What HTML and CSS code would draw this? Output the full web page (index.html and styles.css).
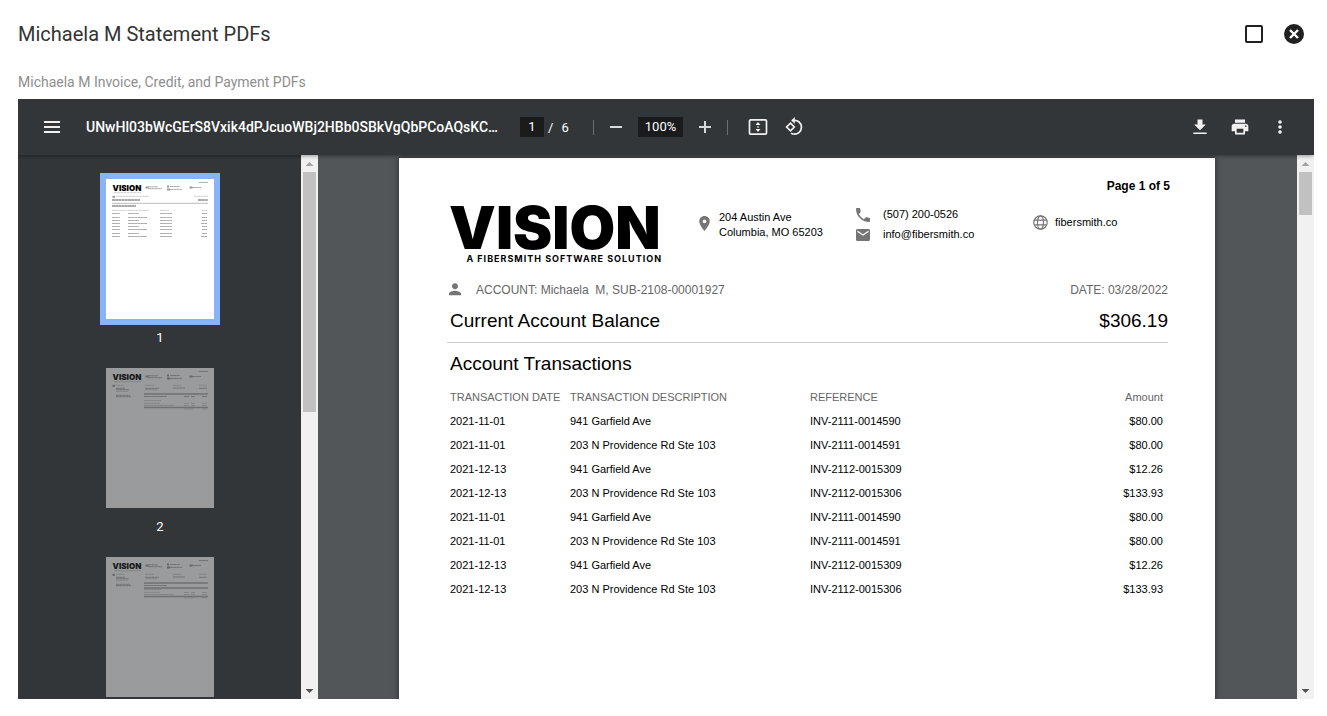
FILE: index.html
```html
<!DOCTYPE html>
<html lang="en">
<head>
<meta charset="utf-8">
<title>Michaela M Statement PDFs</title>
<link rel="stylesheet" href="styles.css">
</head>
<body>
<svg class="defs" aria-hidden="true">
  <symbol id="thumb-head" viewBox="0 0 108 140">
    <text x="6.600" y="12.200" class="mini-logo">VISION</text>
    <path class="mini faint" d="M8 13.700H35"/>
    <path class="mini" d="M93 3.500h9M42 7.800h10M42 9.700h14M64 7.500h10M64 10.400h12M86 8.500h9"/>
    <path class="mini-icon" d="M39.500 8.500h3M61 7.500h2M61 10.500h3M83.500 8.500h3"/>
  </symbol>
  <symbol id="thumb-invoice" viewBox="0 0 108 140">
    <use href="#thumb-head"/>
    <path class="mini-icon" d="M6.500 17.800h2.500"/>
    <path class="mini faint" d="M10 17.300h8M39 17.300h9M67 17.300h8M93 17.300h8M39 21.700h12M10 23.300h12"/>
    <path class="mini" d="M10 20.300h9M10 21.700h13M39 20.300h14M67 20h12M93 20.300h8M10 27.300h14M10 28.700h15"/>
    <path class="mini faint" d="M38 32.500h17M38 35.300h16M38 37.500h30M78 35.500h5M85 35.500h4M96 35.500h5M78 37.500h5M85 37.500h4M96 37.500h5M78 41h10M96 41h5"/>
    <path class="mini-rule" d="M38 39.500h64"/>
  </symbol>
</svg>

<header class="dialog-head">
  <h1>Michaela M Statement PDFs</h1>
  <div class="dialog-actions">
    <button class="plain" type="button" aria-label="Maximize"><svg width="24" height="24" viewBox="0 0 24 24"><rect x="4" y="4" width="16" height="16" rx="1" fill="none" stroke="#212121" stroke-width="2"/></svg></button>
    <button class="plain" type="button" aria-label="Close"><svg width="24" height="24" viewBox="0 0 24 24"><circle cx="12" cy="12" r="10" fill="#212121"/><path d="M8 8l8 8M16 8l-8 8" stroke="#fff" stroke-width="2.400"/></svg></button>
  </div>
</header>
<p class="subtitle">Michaela M Invoice, Credit, and Payment PDFs</p>

<main class="viewer">
  <div class="toolbar">
    <button class="plain" type="button" aria-label="Menu"><svg width="24" height="24" viewBox="0 0 24 24"><path fill="#f1f1f1" d="M4 18h16v-2H4zM4 13h16v-2H4zM4 6v2h16V6z"/></svg></button>
    <span class="filename">UNwHl03bWcGErS8Vxik4dPJcuoWBj2HBb0SBkVgQbPCoAQsKC…</span>
    <div class="pager">
      <input class="field" type="text" value="1" aria-label="Page number">
      <span>/</span><span>6</span>
    </div>
    <i class="divider"></i>
    <div class="zoom">
      <button class="plain" type="button" aria-label="Zoom out"><svg width="20" height="20" viewBox="0 0 20 20"><path fill="#d8d9da" d="M4 9h12v2H4z"/></svg></button>
      <input class="field percent" type="text" value="100%" aria-label="Zoom level">
      <button class="plain" type="button" aria-label="Zoom in"><svg width="20" height="20" viewBox="0 0 20 20"><path fill="#d8d9da" d="M4 9h5V4h2v5h5v2h-5v5H9v-5H4z"/></svg></button>
    </div>
    <i class="divider"></i>
    <div class="fit">
      <button class="plain" type="button" aria-label="Fit to page"><svg width="20" height="20" viewBox="0 0 20 20"><rect x="1.500" y="2.800" width="17" height="14.400" rx="1.300" fill="none" stroke="#f1f1f1" stroke-width="1.700"/><path fill="#f1f1f1" d="M10 5l2.500 3h-5zM10 15l2.500-3h-5zM9.300 9.300h1.400v1.400H9.300z"/></svg></button>
      <button class="plain" type="button" aria-label="Rotate"><svg width="20" height="20" viewBox="0 0 20 20"><g fill="none" stroke="#f1f1f1" stroke-width="1.700"><path d="M6.500 6.100l3.800 3.900-3.800 3.900L2.600 10z"/><path d="M9.500 3.400a6.900 6.900 0 1 1-.2 13.600c-.8-.1-1.500-.4-2.200-.8"/></g><path fill="#f1f1f1" d="M10.800 0v6.800L7.200 3.400z"/></svg></button>
    </div>
    <div class="file-actions">
      <button class="plain" type="button" aria-label="Download"><svg width="20" height="20" viewBox="0 0 24 24"><path fill="#f1f1f1" d="M19 9h-4V3H9v6H5l7 7zM4 18.500v2h16v-2z"/></svg></button>
      <button class="plain" type="button" aria-label="Print"><svg width="20" height="20" viewBox="0 0 24 24"><path fill="#f1f1f1" d="M19 8H5c-1.660 0-3 1.340-3 3v6h4v4h12v-4h4v-6c0-1.660-1.340-3-3-3zm-3 11H8v-5h8v5zm3-7c-.55 0-1-.45-1-1s.45-1 1-1 1 .45 1 1-.45 1-1 1zm-1-9H6v4h12V3z"/></svg></button>
      <button class="plain" type="button" aria-label="More actions"><svg width="20" height="20" viewBox="0 0 20 20"><g fill="#f1f1f1"><circle cx="10" cy="5" r="1.800"/><circle cx="10" cy="10" r="1.800"/><circle cx="10" cy="15" r="1.800"/></g></svg></button>
    </div>
  </div>

  <div class="panes">
    <nav class="thumbs" aria-label="Pages">
      <figure class="thumb selected">
        <svg viewBox="0 0 108 140"><use href="#thumb-head"/>
          <path class="mini-icon" d="M6.500 17.800h2.500"/>
          <path class="mini faint" d="M10 17.300h33M88 17.300h14M6 31.400h15M22 31.400h21M54 31.400h9M96 31.400h5"/>
          <path class="mini strong" d="M6 21h28M92 21h10M6 27h24"/>
          <path class="mini-rule thin" d="M6 24.300h96"/>
          <path class="mini" d="M6 34.500h8M22 34.500h11M54 34.500h12M96 34.500h5M6 38.500h8M22 38.500h19M54 38.500h12M96 38.500h5M6 41.500h8M22 41.500h11M54 41.500h12M96 41.500h5M6 44.500h8M22 44.500h19M54 44.500h12M95 44.500h6M6 47.500h8M22 47.500h11M54 47.500h12M96 47.500h5M6 50.500h8M22 50.500h19M54 50.500h12M96 50.500h5M6 54.500h8M22 54.500h11M54 54.500h12M96 54.500h5M6 57.500h8M22 57.500h19M54 57.500h12M95 57.500h6"/>
        </svg>
        <figcaption>1</figcaption>
      </figure>
      <figure class="thumb">
        <svg viewBox="0 0 108 140"><use href="#thumb-invoice"/>
          <path class="mini-rule" d="M38 26h64"/><path class="mini" d="M38 28.500h23M78 28.500h5M85 28.500h4M96 28.500h5"/>
        </svg>
        <figcaption>2</figcaption>
      </figure>
      <figure class="thumb">
        <svg viewBox="0 0 108 140"><use href="#thumb-invoice"/>
          <path class="mini-rule" d="M38 26h64M38 31h64"/><path class="mini" d="M38 28.500h23"/>
        </svg>
      </figure>
    </nav>
    <div class="scrollbar" aria-hidden="true"><i class="up"></i><div class="track"><div class="grip" style="height:47%"></div></div><i class="down"></i></div>

    <section class="stage">
      <article class="page">
        <p class="page-no">Page 1 of 5</p>
        <div class="letterhead">
          <div class="logo"><span class="logo-name">VISION</span><span class="logo-tag">A FIBERSMITH SOFTWARE SOLUTION</span></div>
          <div class="contact address">
            <svg width="11" height="15" viewBox="0 0 14 20"><path fill="#757575" d="M7 0C3.130 0 0 3.130 0 7c0 5.250 7 13 7 13s7-7.750 7-13c0-3.870-3.130-7-7-7zm0 9.500a2.500 2.500 0 0 1 0-5 2.500 2.500 0 0 1 0 5z"/></svg>
            <span>204 Austin Ave<br>Columbia, MO 65203</span>
          </div>
          <div class="contact-list">
            <div class="contact"><svg width="14" height="14" viewBox="3 3 18 18"><path fill="#757575" d="M6.620 10.790c1.440 2.830 3.760 5.140 6.590 6.590l2.200-2.200c.27-.27.67-.36 1.020-.24 1.120.37 2.330.57 3.570.57.55 0 1 .45 1 1V20c0 .55-.45 1-1 1-9.390 0-17-7.610-17-17 0-.55.45-1 1-1h3.500c.55 0 1 .45 1 1 0 1.250.2 2.450.57 3.570.11.35.03.74-.25 1.020z"/></svg><span>(507) 200-0526</span></div>
            <div class="contact"><svg width="14" height="12" viewBox="2 4 20 16" preserveAspectRatio="none"><path fill="#757575" d="M20 4H4c-1.100 0-2 .9-2 2v12c0 1.100.9 2 2 2h16c1.100 0 2-.9 2-2V6c0-1.100-.9-2-2-2zm0 4l-8 5-8-5V6l8 5 8-5z"/></svg><span>info@fibersmith.co</span></div>
          </div>
          <div class="contact site">
            <svg width="15" height="15" viewBox="0 0 15 15"><g fill="none" stroke="#757575" stroke-width="1.200"><circle cx="7.500" cy="7.500" r="6.700"/><ellipse cx="7.500" cy="7.500" rx="3" ry="6.700"/><path d="M1.300 5.200h12.400M1.300 9.800h12.400"/></g></svg>
            <span>fibersmith.co</span>
          </div>
        </div>

        <div class="account">
          <svg width="12" height="14" viewBox="4 4 16 18"><path fill="#757575" d="M12 12c2.210 0 4-1.790 4-4s-1.790-4-4-4-4 1.790-4 4 1.790 4 4 4zm0 2c-2.670 0-8 1.340-8 4v2h16v-2c0-2.660-5.330-4-8-4z"/></svg>
          <span class="account-name">ACCOUNT: Michaela&nbsp; M, SUB-2108-00001927</span>
          <span>DATE: 03/28/2022</span>
        </div>
        <div class="balance"><h2>Current Account Balance</h2><span>$306.19</span></div>

        <h2 class="section-title">Account Transactions</h2>
        <table>
          <thead><tr><th class="c-date">TRANSACTION DATE</th><th class="c-desc">TRANSACTION DESCRIPTION</th><th>REFERENCE</th><th class="num">Amount</th></tr></thead>
          <tbody>
            <tr><td>2021-11-01</td><td>941 Garfield Ave</td><td>INV-2111-0014590</td><td class="num">$80.00</td></tr>
            <tr><td>2021-11-01</td><td>203 N Providence Rd Ste 103</td><td>INV-2111-0014591</td><td class="num">$80.00</td></tr>
            <tr><td>2021-12-13</td><td>941 Garfield Ave</td><td>INV-2112-0015309</td><td class="num">$12.26</td></tr>
            <tr><td>2021-12-13</td><td>203 N Providence Rd Ste 103</td><td>INV-2112-0015306</td><td class="num">$133.93</td></tr>
            <tr><td>2021-11-01</td><td>941 Garfield Ave</td><td>INV-2111-0014590</td><td class="num">$80.00</td></tr>
            <tr><td>2021-11-01</td><td>203 N Providence Rd Ste 103</td><td>INV-2111-0014591</td><td class="num">$80.00</td></tr>
            <tr><td>2021-12-13</td><td>941 Garfield Ave</td><td>INV-2112-0015309</td><td class="num">$12.26</td></tr>
            <tr><td>2021-12-13</td><td>203 N Providence Rd Ste 103</td><td>INV-2112-0015306</td><td class="num">$133.93</td></tr>
          </tbody>
        </table>
      </article>
    </section>
    <div class="scrollbar" aria-hidden="true"><i class="up"></i><div class="track"><div class="grip" style="height:8.5%"></div></div><i class="down"></i></div>
  </div>
</main>
</body>
</html>
```
FILE: styles.css
```css
* { box-sizing: border-box; }

body {
  margin: 0;
  height: 100vh;
  padding: 16px 13px 17px 18px;
  display: flex;
  flex-direction: column;
  overflow: hidden;
  background: #fff;
  font-family: Roboto, "Liberation Sans", sans-serif;
}

h1, h2, p, figure { margin: 0; font-weight: 400; }
svg { display: block; flex: none; }
.defs { display: none; }

.plain {
  display: block;
  flex: none;
  padding: 0;
  border: 0;
  background: none;
  cursor: pointer;
}

.dialog-head {
  display: flex;
  align-items: center;
  justify-content: space-between;
  height: 36px;
  padding-right: 8px;
}
.dialog-head h1 { font-size: 20px; color: #333; }
.dialog-actions { display: flex; gap: 16px; }

.subtitle {
  margin: 20px 0 7px;
  font-size: 14px;
  line-height: 20px;
  color: #8e8e8e;
}

.viewer {
  flex: 1;
  min-height: 0;
  display: flex;
  flex-direction: column;
  overflow: hidden;
  background: #525659;
}

/* Toolbar */
.toolbar {
  position: relative;
  z-index: 1;
  flex: none;
  display: flex;
  align-items: center;
  height: 56px;
  padding: 0 24px 0 22px;
  background: #323639;
  color: #fff;
  font-size: 13px;
  box-shadow: 0 1px 4px rgba(0, 0, 0, .4);
}
.filename {
  width: 418px;
  margin: 0 16px 0 22px;
  font-size: 14px;
  font-weight: 500;
  overflow: hidden;
  white-space: nowrap;
  text-overflow: ellipsis;
}
.pager { display: flex; align-items: center; gap: 4px; width: 73px; }
.pager span + span { margin-left: 4px; }
.field {
  width: 24px;
  height: 20px;
  padding: 0;
  border: 0;
  background: #191b1c;
  color: #fff;
  font: 400 13px/20px Roboto, "Liberation Sans", sans-serif;
  text-align: center;
}
.percent { width: 45px; }
.divider { width: 1px; height: 15px; background: #6c6f71; }
.zoom { display: flex; align-items: center; gap: 12px; margin: 0 12px; }
.fit { display: flex; gap: 16px; margin-left: 20px; }
.file-actions { display: flex; gap: 20px; margin-left: auto; }

/* Panes */
.panes { flex: 1; min-height: 0; display: flex; }

.thumbs {
  flex: none;
  width: 283px;
  padding-top: 24px;
  overflow: hidden;
  background: #323639;
}
.thumb { width: 108px; margin: 0 auto 12px 88px; }
.thumb svg { width: 108px; height: 140px; background: #fff; opacity: .5; }
.thumb.selected svg { opacity: 1; outline: 6px solid #8ab4f8; }
.thumb figcaption {
  color: #fff;
  font-size: 13px;
  line-height: 37px;
  text-align: center;
}
.mini-logo { font: 900 8px Inter, sans-serif; }
.mini { fill: none; stroke: #888; stroke-width: .7; stroke-dasharray: 3 .2; }
.faint { stroke: #bbb; }
.strong { stroke: #555; stroke-width: 1; }
.mini-icon { fill: none; stroke: #999; stroke-width: 2; }
.mini-rule { fill: none; stroke: #aaa; stroke-width: 1.4; }
.thin { stroke-width: .8; }

.scrollbar {
  flex: none;
  display: flex;
  flex-direction: column;
  align-items: center;
  width: 17px;
  background: #f1f1f1;
}
.scrollbar .track { flex: 1; width: 13px; }
.grip { background: #c1c1c1; }
.up, .down {
  width: 8px;
  height: 4px;
  margin: 7px 0 6px;
  background: #a3a3a3;
  clip-path: polygon(50% 0, 100% 100%, 0 100%);
}
.down { background: #505050; clip-path: polygon(0 0, 100% 0, 50% 100%); }

.stage {
  flex: 1;
  min-width: 0;
  overflow: hidden;
  padding: 3px 1px 0 0;
}

/* Statement page */
.page {
  width: 816px;
  min-height: 1056px;
  margin: 0 auto;
  padding: 20px 47px 48px 48px;
  background: #fff;
  color: #000;
  font-family: "Liberation Sans", Arial, sans-serif;
  font-size: 11px;
  box-shadow: 0 0 6px rgba(0, 0, 0, .5);
}
.page-no { margin-right: -2px; font-size: 12px; font-weight: 700; line-height: 16px; text-align: right; }

.letterhead {
  display: grid;
  grid-template-columns: 252px 157px 177px 1fr;
  align-items: start;
  height: 78px;
  padding-top: 8px;
}
.logo { display: flex; flex-direction: column; width: 215px; padding-left: 2px; }
.logo-name { font: 900 59px/52px Inter, sans-serif; }
.logo-tag {
  font: 700 9px/10px Inter, sans-serif;
  letter-spacing: 1px;
  white-space: nowrap;
  text-align: right;
}
.contact { display: flex; align-items: center; gap: 9px; line-height: 15px; }
.address { padding-top: 8px; }
.address svg { margin-bottom: 4px; }
.site { gap: 7px; padding-top: 13px; }
.contact-list { display: grid; gap: 5px; padding-top: 5px; }
.contact-list .contact { gap: 13px; }

.account {
  display: flex;
  align-items: center;
  height: 20px;
  margin-top: 8px;
  padding-left: 2px;
  color: #666;
  font-size: 12px;
}
.account-name { flex: 1; margin-left: 15px; }
.balance {
  display: flex;
  align-items: center;
  justify-content: space-between;
  height: 43px;
  padding-left: 3px;
  font-size: 19px;
  border-bottom: 1px solid #ccc;
}
.page h2 { font-size: 19px; }
.section-title { padding: 9px 3px; line-height: 24px; }

table { width: 100%; table-layout: fixed; border-collapse: collapse; }
th, td { height: 24px; padding: 0 5px 0 3px; text-align: left; white-space: nowrap; }
th { color: #666; font-weight: 400; }
.c-date { width: 120px; }
.c-desc { width: 240px; }
.num { text-align: right; }
```
